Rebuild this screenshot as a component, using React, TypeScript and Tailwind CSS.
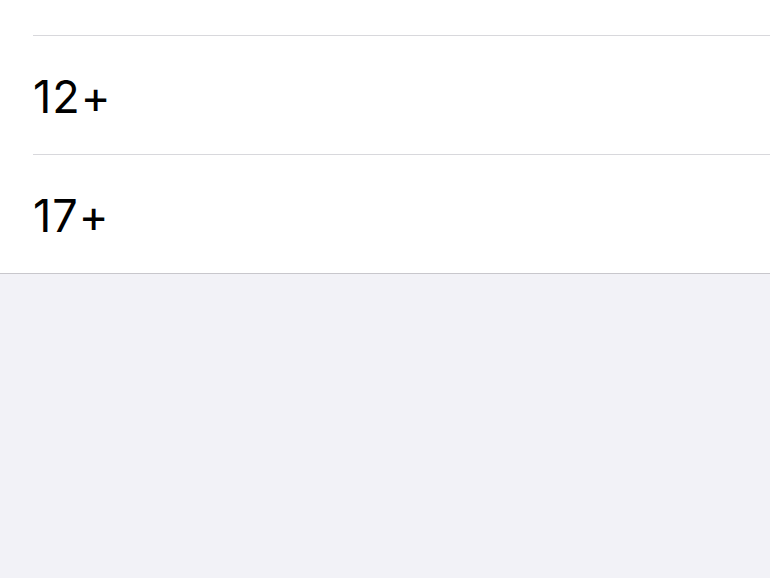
import React from 'react';

const ratings = ['12+', '17+'];

export default function App() {
    return (
        <div className="w-[770px] h-[578px] bg-[#f2f2f7] overflow-hidden" style={{ fontFamily: 'Inter, "Liberation Sans", sans-serif' }}>
            <div className="bg-white border-b border-[#c8c7cc]">
                <div className="pl-[33px]">
                    <div className="h-[36px] border-b border-[#d8d8dc]" />
                </div>
                {ratings.map((r, i) => (
                    <div key={r} className="pl-[33px]">
                        <div className={`flex items-center text-[45px] text-black tracking-[1px] ${i < ratings.length - 1 ? 'h-[119px] border-b border-[#d8d8dc]' : 'h-[118px]'}`}>
                            <span className="pt-[4px]">{r}</span>
                        </div>
                    </div>
                ))}
            </div>
        </div>
    );
}
